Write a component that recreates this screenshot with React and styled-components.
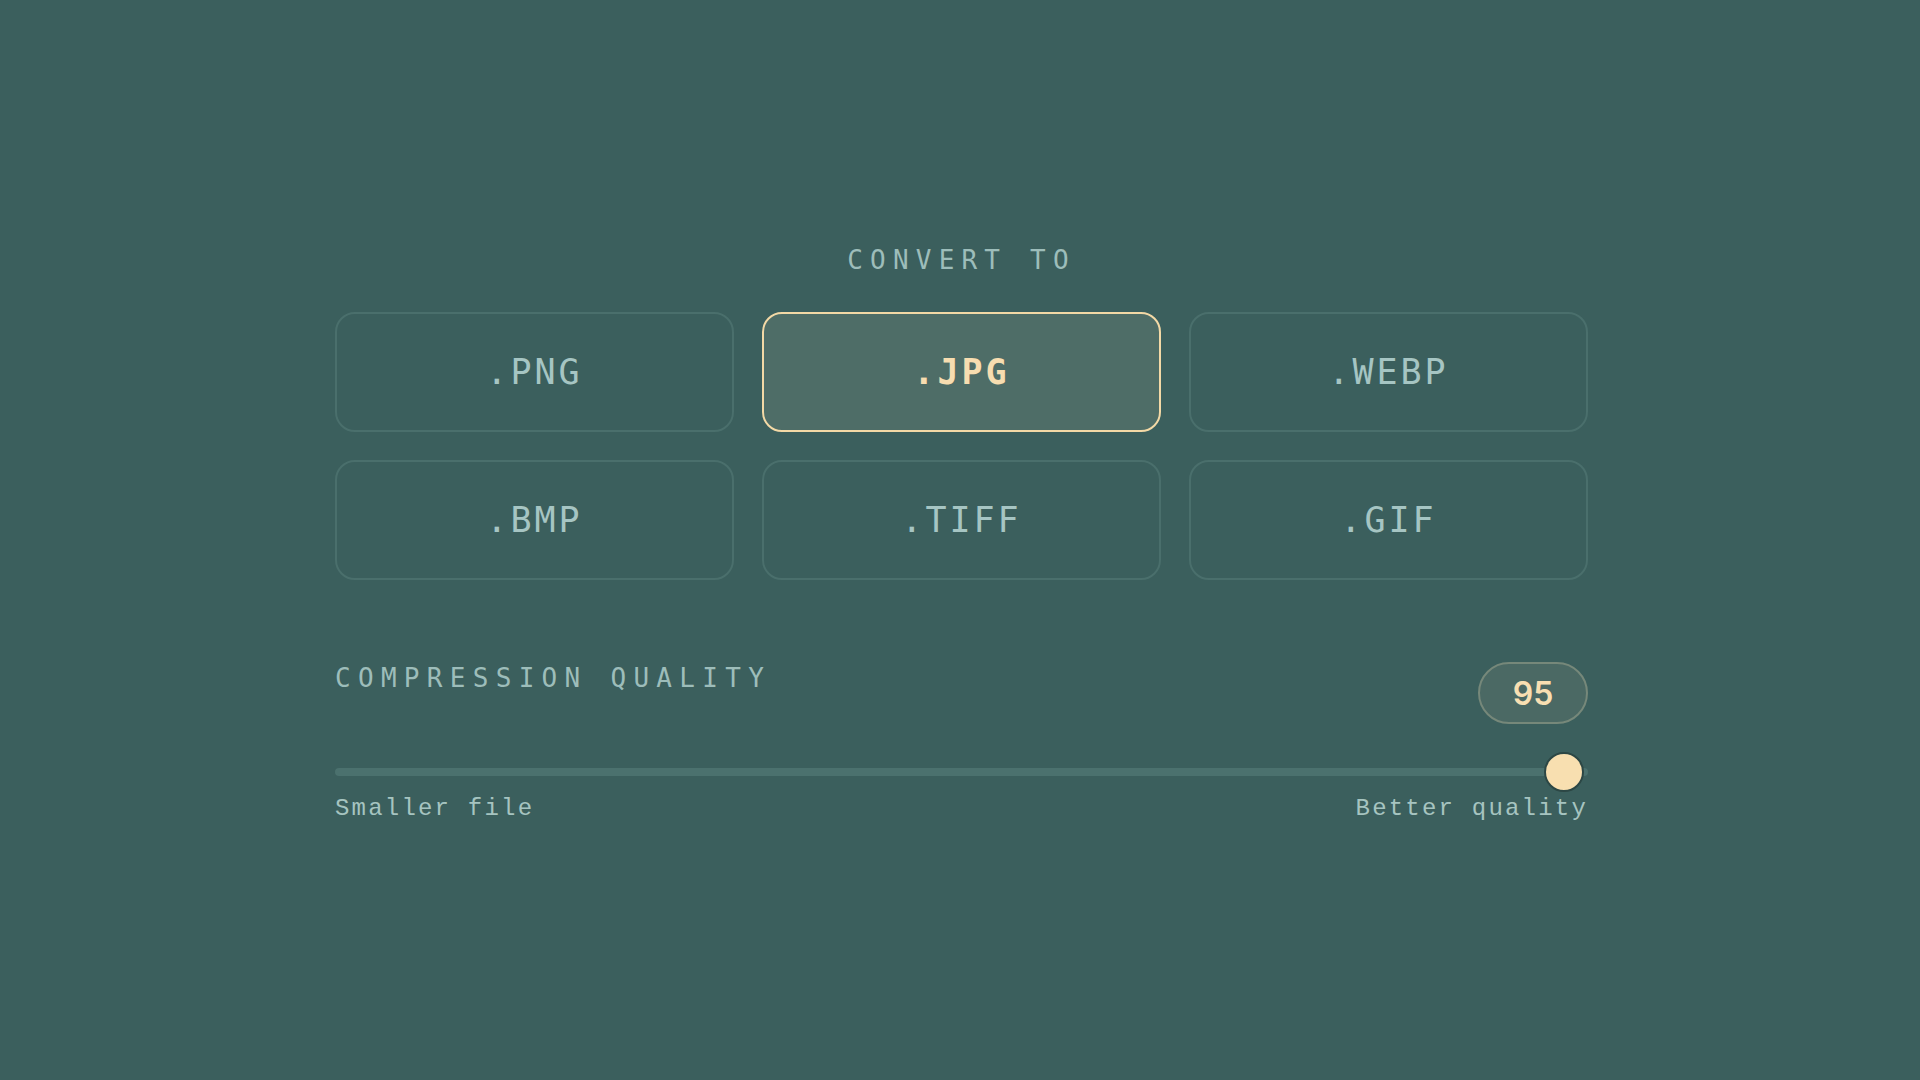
import React, { useState } from "react";
import styled, { createGlobalStyle } from "styled-components";

const GlobalStyle = createGlobalStyle`
  html, body {
    margin: 0;
    padding: 0;
    background: #3b5f5d;
  }
`;

const Page = styled.div`
  min-height: 100vh;
  background: #3b5f5d;
  display: flex;
  justify-content: center;
  padding-top: 247px;
  padding-left: 3px;
  box-sizing: border-box;
`;

const Panel = styled.div`
  width: 1253px;
`;

const Title = styled.div`
  font-family: "DejaVu Sans Mono", monospace;
  font-size: 26px;
  line-height: 26px;
  letter-spacing: 7.2px;
  color: #9dbdba;
  text-align: center;
  margin-bottom: 39px;
`;

const FormatGrid = styled.div`
  display: grid;
  grid-template-columns: repeat(3, 1fr);
  gap: 28px;
`;

const FormatButton = styled.button`
  height: 120px;
  border-radius: 20px;
  border: 2px solid ${(p) => (p.$active ? "#f3d9a6" : "#4a6f6c")};
  background: ${(p) => (p.$active ? "#4e6d67" : "transparent")};
  color: ${(p) => (p.$active ? "#f7ddb0" : "#a6c5c3")};
  font-family: "DejaVu Sans Mono", monospace;
  font-size: 35px;
  font-weight: ${(p) => (p.$active ? 700 : 500)};
  letter-spacing: 3px;
  display: flex;
  align-items: center;
  justify-content: center;
  cursor: pointer;
  padding: 0;
`;

const QualityHeader = styled.div`
  display: flex;
  justify-content: space-between;
  align-items: flex-start;
  margin-top: 82px;
`;

const Label = styled.div`
  font-family: "DejaVu Sans Mono", monospace;
  font-size: 26px;
  line-height: 26px;
  letter-spacing: 7.3px;
  color: #9dbdba;
  margin-top: 3px;
`;

const ValuePill = styled.div`
  width: 110px;
  height: 62px;
  box-sizing: border-box;
  border-radius: 31px;
  border: 2px solid #76887a;
  background: #4b6964;
  color: #f8dfb2;
  font-family: Inter, "DejaVu Sans", sans-serif;
  font-size: 32px;
  font-weight: 600;
  display: flex;
  align-items: center;
  justify-content: center;
`;

const Slider = styled.div`
  position: relative;
  height: 40px;
  margin-top: 28px;
  display: flex;
  align-items: center;
`;

const Track = styled.div`
  width: 100%;
  height: 8px;
  border-radius: 4px;
  background: #4b716e;
`;

const Thumb = styled.div`
  position: absolute;
  top: 0;
  width: 36px;
  height: 36px;
  border-radius: 50%;
  background: #f8dfb0;
  border: 2px solid #2c4745;
  transform: translateX(-50%);
`;

const Hints = styled.div`
  display: flex;
  justify-content: space-between;
  margin-top: 4px;
  font-family: "Liberation Mono", monospace;
  font-size: 24px;
  line-height: 26px;
  letter-spacing: 2.2px;
  color: #a6c4c0;
`;

const formats = [".PNG", ".JPG", ".WEBP", ".BMP", ".TIFF", ".GIF"];

export default function App() {
  const [selected, setSelected] = useState(".JPG");
  const quality = 95;
  const thumbPct = 98.1;

  return (
    <>
      <GlobalStyle />
      <Page>
        <Panel>
          <Title>CONVERT TO</Title>
          <FormatGrid>
            {formats.map((f) => (
              <FormatButton
                key={f}
                $active={f === selected}
                onClick={() => setSelected(f)}
              >
                {f}
              </FormatButton>
            ))}
          </FormatGrid>
          <QualityHeader>
            <Label>COMPRESSION QUALITY</Label>
            <ValuePill>{quality}</ValuePill>
          </QualityHeader>
          <Slider>
            <Track />
            <Thumb style={{ left: `${thumbPct}%` }} />
          </Slider>
          <Hints>
            <span>Smaller file</span>
            <span>Better quality</span>
          </Hints>
        </Panel>
      </Page>
    </>
  );
}
